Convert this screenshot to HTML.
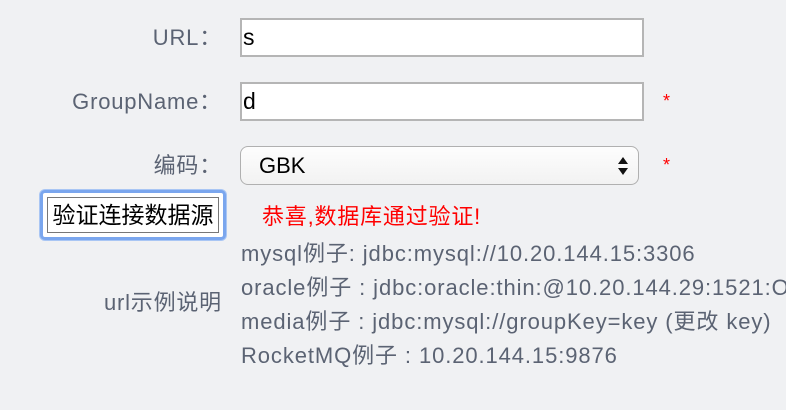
<!DOCTYPE html>
<html><head><meta charset="utf-8"><style>
body{margin:0;width:786px;height:410px;background:#f0f1f3;font-family:"Liberation Sans","Noto Sans CJK SC",sans-serif;overflow:hidden;position:relative}
.a{position:absolute;white-space:nowrap;line-height:26px}
.lbl{color:#5b6373;font-size:22px;letter-spacing:0.8px;text-align:right;width:222px;left:0}
.inp{position:absolute;left:240px;width:399px;height:35px;background:#fff;border:2px solid #b5b5b5;font-size:23px;line-height:35px;padding-left:1px;color:#000}
.star{color:#f00;font-size:18px}
.ex{color:#5b6373;font-size:22px;letter-spacing:0.9px;left:241px;width:545px;overflow:hidden}
</style></head><body>
<div class="a lbl" style="top:25px">URL：</div>
<div class="inp" style="top:18px">s</div>
<div class="a lbl" style="top:89px">GroupName：</div>
<div class="inp" style="top:82px">d</div>
<div class="a star" style="left:663px;top:88px">*</div>
<div class="a lbl" style="top:153px">编码：</div>
<div class="a" style="left:240px;top:146px;width:397px;height:37px;border:1px solid #b0b0b0;border-radius:8px;background:linear-gradient(#fdfdfd,#f2f2f2);font-size:22px;line-height:37px;"><span style="margin-left:18px">GBK</span>
<svg style="position:absolute;right:10px;top:9px" width="10" height="20"><path d="M0 8L5 1L10 8Z M0 12L5 19L10 12Z" fill="#111"/></svg></div>
<div class="a star" style="left:663px;top:152px">*</div>
<div class="a" style="left:40px;top:190px;width:180px;height:44px;border:3px solid #7aa6ee;border-radius:5px;background:#fff;box-shadow:0 0 0 1px #a9c6f4"><div style="position:absolute;left:4px;top:4px;right:4px;bottom:4px;border:1px solid #777;font-size:23px;line-height:34px;text-align:center;color:#000;letter-spacing:0">验证连接数据源</div></div>
<div class="a" style="left:262px;top:204px;color:#f00;font-size:22px;letter-spacing:0.8px">恭喜,数据库通过验证!</div>
<div class="a lbl" style="top:290px">url示例说明</div>
<div class="a ex" style="top:241px">mysql例子: jdbc:mysql://10.20.144.15:3306</div>
<div class="a ex" style="top:275px">oracle例子 : jdbc:oracle:thin:@10.20.144.29:1521:OINT</div>
<div class="a ex" style="top:309px">media例子 : jdbc:mysql://groupKey=key (更改 key)</div>
<div class="a ex" style="top:343px">RocketMQ例子 : 10.20.144.15:9876</div>
</body></html>
